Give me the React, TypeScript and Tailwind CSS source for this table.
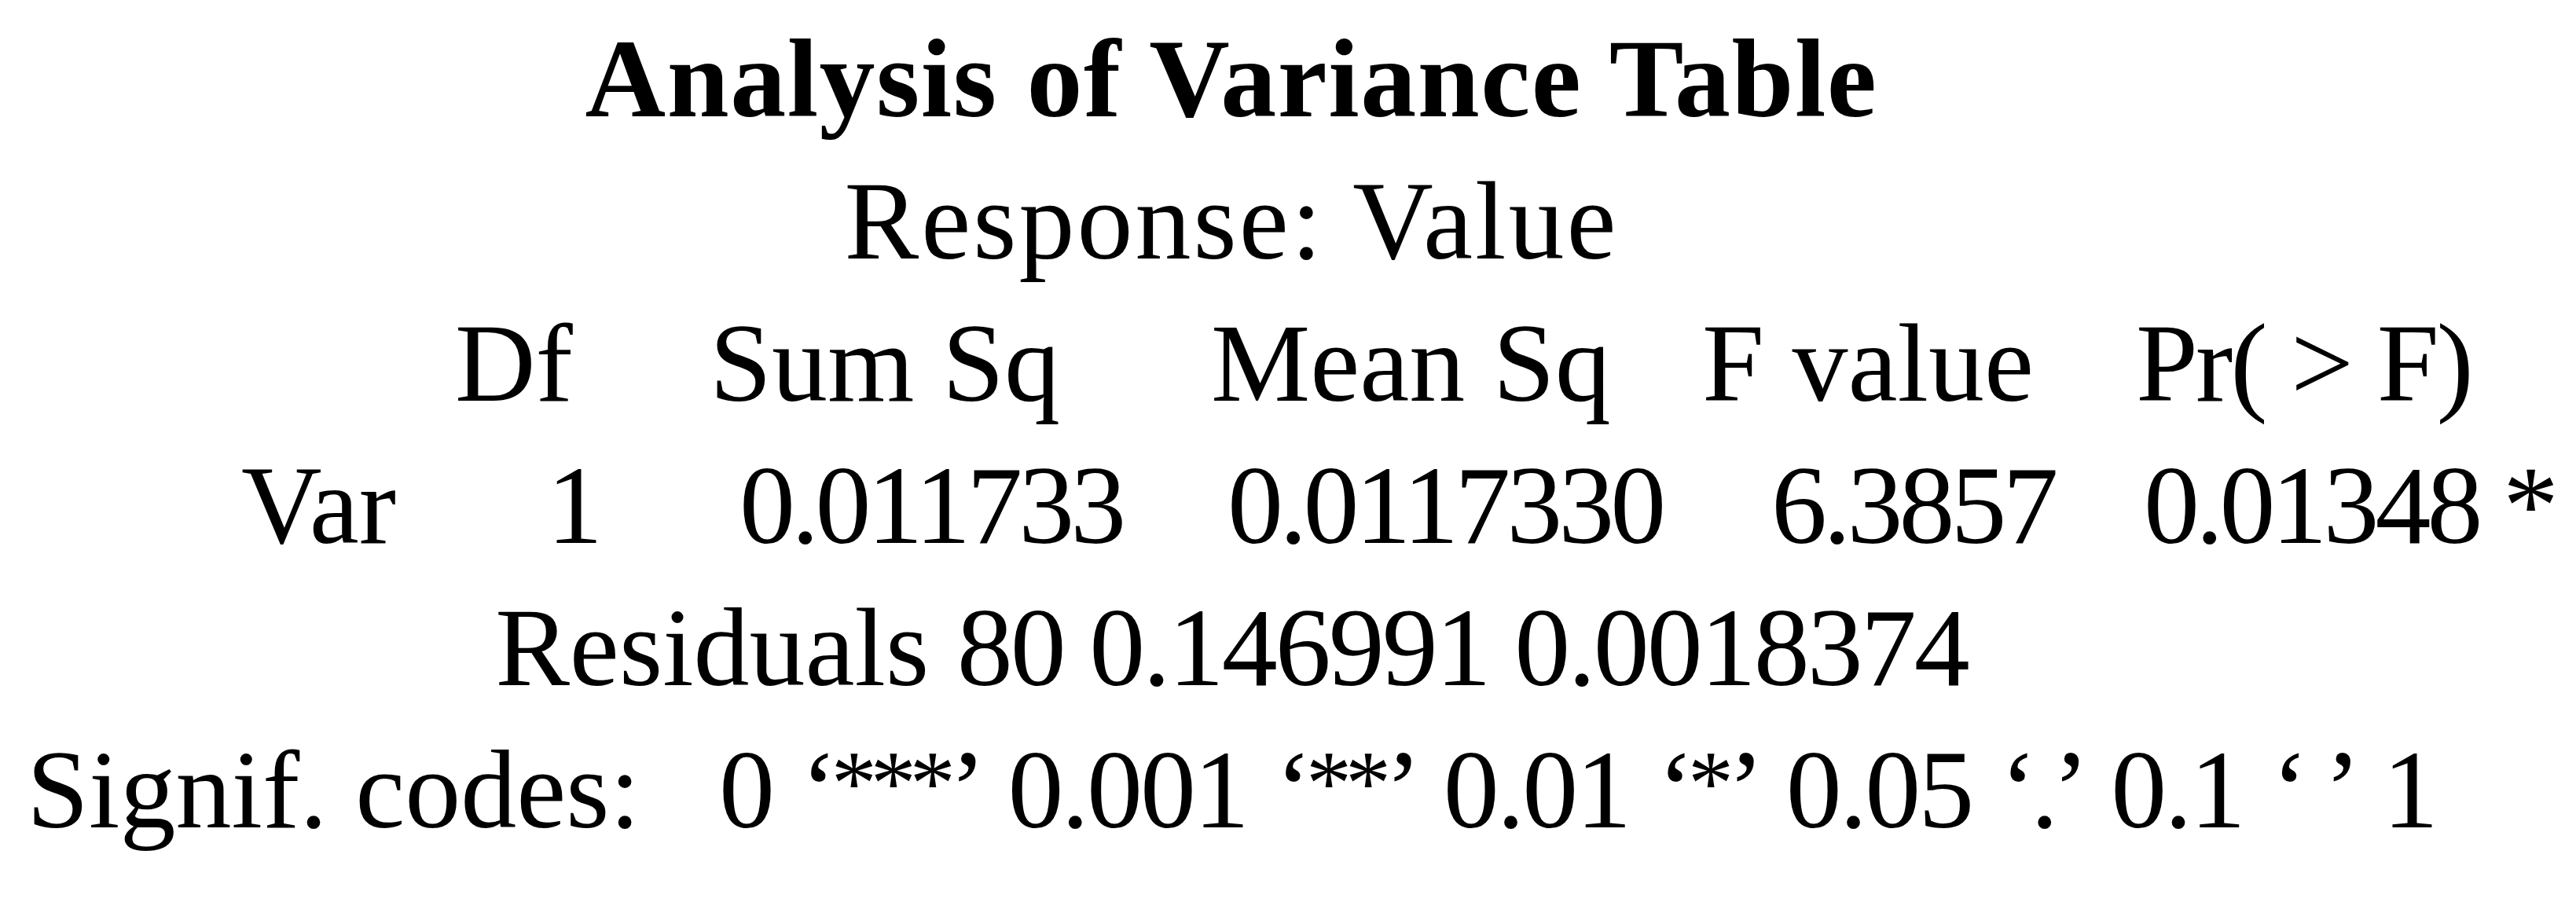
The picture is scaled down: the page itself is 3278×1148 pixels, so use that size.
const SERIF = "font-['Liberation_Serif','Times_New_Roman',serif]";

// Column starts are in page pixels; each cell is as wide as the gap to the next start.
const HEADER: { text: string; width: number; tight?: boolean }[] = [
  { text: 'Df', width: 324 },
  { text: 'Sum Sq', width: 638 },
  { text: 'Mean Sq', width: 625 },
  { text: 'F value', width: 552 },
  { text: 'Pr( > F)', width: 560, tight: true },
];

const VAR_ROW: { text: string; width: number; num?: boolean }[] = [
  { text: 'Var', width: 389 },
  { text: '1', width: 245, num: true },
  { text: '0.011733', width: 621, num: true },
  { text: '0.0117330', width: 692, num: true },
  { text: '6.3857', width: 474, num: true },
  { text: '0.01348 *', width: 560, num: true },
];

function Num({ children }: { children: React.ReactNode }) {
  return <span className="tracking-[-5px]">{children}</span>;
}

// significance code in quotes; the stars are smaller and sit high, as in the source
function Code({ stars, mark }: { stars?: string; mark?: string }) {
  return (
    <span className="tracking-[-8px]">
      ‘
      {stars ? (
        <span className="relative -top-[17px] text-[116px] tracking-[-8px]">{stars}</span>
      ) : (
        mark
      )}
      ’
    </span>
  );
}

export default function App() {
  return (
    <div className={`min-h-screen w-[3278px] bg-white text-black ${SERIF} text-[142px] leading-[181px] pt-[10px] whitespace-nowrap`}>
      <div className="w-[3134px] text-center font-bold tracking-[1.5px]">Analysis of Variance Table</div>
      <div className="w-[3134px] text-center tracking-[3px]">Response: Value</div>

      <div className="flex pl-[579px]">
        {HEADER.map((c) => (
          <div
            key={c.text}
            className={c.tight ? 'shrink-0 tracking-[-3px]' : 'shrink-0'}
            style={{ width: c.width }}
          >
            {c.text}
          </div>
        ))}
      </div>

      <div className="flex pl-[307px]">
        {VAR_ROW.map((c) => (
          <div key={c.text} className="shrink-0" style={{ width: c.width }}>
            {c.num ? <Num>{c.text}</Num> : c.text}
          </div>
        ))}
      </div>

      <div className="w-[3134px] text-center">
        Residuals <span className="tracking-[-3px]">80 0.146991 0.0018374</span>
      </div>

      <div className="w-[3134px] text-center">
        Signif. codes:<span className="inline-block w-[100px]" />
        <span className="tracking-[-3px]">0</span> <Code stars="***" />{' '}
        <span className="tracking-[-3px]">0.001</span> <Code stars="**" />{' '}
        <span className="tracking-[-3px]">0.01</span> <Code stars="*" />{' '}
        <span className="tracking-[-3px]">0.05</span> <Code mark="." />{' '}
        <span className="tracking-[-3px]">0.1</span> <Code mark=" " />{' '}
        <span className="tracking-[-3px]">1</span>
      </div>
    </div>
  );
}
